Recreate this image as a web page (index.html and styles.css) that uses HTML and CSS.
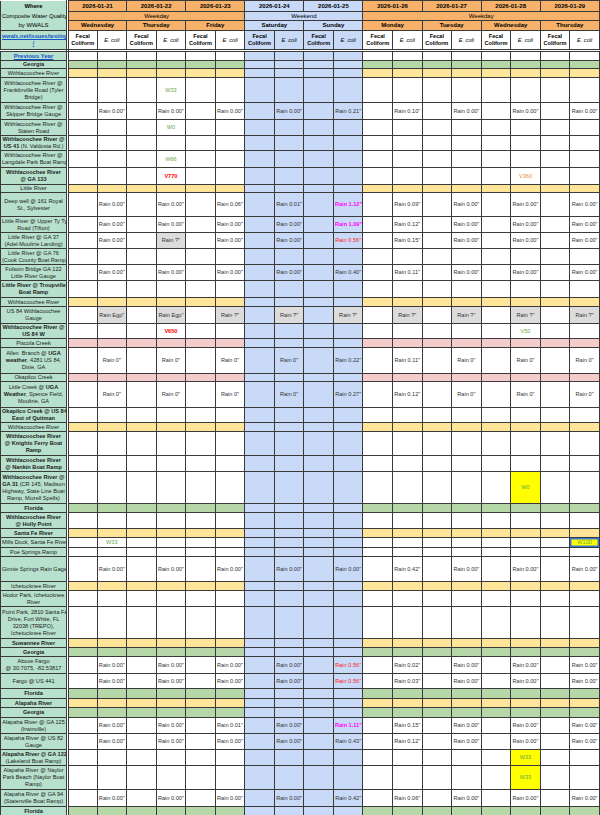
FILE: index.html
```html
<!DOCTYPE html>
<html lang="en">
<head>
<meta charset="utf-8">
<title>Composite Water Quality by WWALS</title>
<link rel="stylesheet" href="styles.css">
</head>
<body>
<table class="sheet">
<colgroup><col class="where"><col span="18"></colgroup>
<thead>
<tr class="hr1">
<th class="w"><b>Where</b></th>
<th colspan="2" class="or">2026-01-21</th><th colspan="2" class="or">2026-01-22</th><th colspan="2" class="or">2026-01-23</th><th colspan="2" class="bl">2026-01-24</th><th colspan="2" class="bl">2026-01-25</th><th colspan="2" class="or">2026-01-26</th><th colspan="2" class="or">2026-01-27</th><th colspan="2" class="or">2026-01-28</th><th colspan="2" class="or">2026-01-29</th>
</tr>
<tr class="hr2">
<th class="w">Composite Water Quality</th>
<th colspan="6" class="or n">Weekday</th><th colspan="4" class="bl n">Weekend</th><th colspan="8" class="or n">Weekday</th>
</tr>
<tr class="hr3">
<th class="w">by WWALS</th>
<th colspan="2" class="or">Wednesday</th><th colspan="2" class="or">Thursday</th><th colspan="2" class="or">Friday</th><th colspan="2" class="bl">Saturday</th><th colspan="2" class="bl">Sunday</th><th colspan="2" class="or">Monday</th><th colspan="2" class="or">Tuesday</th><th colspan="2" class="or">Wednesday</th><th colspan="2" class="or">Thursday</th>
</tr>
<tr class="hr4">
<th class="w"><a class="lnk" href="#">wwals.net/issues/testing<br>/</a></th>
<th>Fecal<br>Coliform</th><th class="ec">E. coli</th><th>Fecal<br>Coliform</th><th class="ec">E. coli</th><th>Fecal<br>Coliform</th><th class="ec">E. coli</th><th class="bl">Fecal<br>Coliform</th><th class="bl ec">E. coli</th><th class="bl">Fecal<br>Coliform</th><th class="bl ec">E. coli</th><th>Fecal<br>Coliform</th><th class="ec">E. coli</th><th>Fecal<br>Coliform</th><th class="ec">E. coli</th><th>Fecal<br>Coliform</th><th class="ec">E. coli</th><th>Fecal<br>Coliform</th><th class="ec">E. coli</th>
</tr>
</thead>
<tbody>
<tr class="h10"><th><a class="lnk prev" href="#">Previous Year</a></th><td></td><td></td><td></td><td></td><td></td><td></td><td></td><td></td><td></td><td></td><td></td><td></td><td></td><td></td><td></td><td></td><td></td><td></td></tr>
<tr class="grn h8"><th><b>Georgia</b></th><td></td><td></td><td></td><td></td><td></td><td></td><td></td><td></td><td></td><td></td><td></td><td></td><td></td><td></td><td></td><td></td><td></td><td></td></tr>
<tr class="yel h9"><th>Withlacoochee River</th><td></td><td></td><td></td><td></td><td></td><td></td><td></td><td></td><td></td><td></td><td></td><td></td><td></td><td></td><td></td><td></td><td></td><td></td></tr>
<tr class="h25"><th>Withlacoochee River @<br>Franklinville Road (Tyler<br>Bridge)</th><td></td><td></td><td></td><td class="g">W33</td><td></td><td></td><td></td><td></td><td></td><td></td><td></td><td></td><td></td><td></td><td></td><td></td><td></td><td></td></tr>
<tr class="h17"><th>Withlacoochee River @<br>Skipper Bridge Gauge</th><td></td><td>Rain 0.00"</td><td></td><td>Rain 0.00"</td><td></td><td>Rain 0.00"</td><td></td><td>Rain 0.00"</td><td></td><td>Rain 0.21"</td><td></td><td>Rain 0.10"</td><td></td><td>Rain 0.00"</td><td></td><td>Rain 0.00"</td><td></td><td>Rain 0.00"</td></tr>
<tr class="h16"><th>Withlacoochee River @<br>Staten Road</th><td></td><td></td><td></td><td class="g">W0</td><td></td><td></td><td></td><td></td><td></td><td></td><td></td><td></td><td></td><td></td><td></td><td></td><td></td><td></td></tr>
<tr class="h15"><th><b>Withlacoochee River @<br>US 41</b> (N. Valdosta Rd.)</th><td></td><td></td><td></td><td></td><td></td><td></td><td></td><td></td><td></td><td></td><td></td><td></td><td></td><td></td><td></td><td></td><td></td><td></td></tr>
<tr class="h17"><th>Withlacoochee River @<br>Langdale Park Boat Ramp</th><td></td><td></td><td></td><td class="g">W66</td><td></td><td></td><td></td><td></td><td></td><td></td><td></td><td></td><td></td><td></td><td></td><td></td><td></td><td></td></tr>
<tr class="h17"><th><b>Withlacoochee River<br>@ GA 133</b></th><td></td><td></td><td></td><td class="rb">V770</td><td></td><td></td><td></td><td></td><td></td><td></td><td></td><td></td><td></td><td></td><td></td><td class="o">V360</td><td></td><td></td></tr>
<tr class="yel h8"><th>Little River</th><td></td><td></td><td></td><td></td><td></td><td></td><td></td><td></td><td></td><td></td><td></td><td></td><td></td><td></td><td></td><td></td><td></td><td></td></tr>
<tr class="h24"><th>Deep well @ 161 Royal<br>St., Sylvester</th><td></td><td>Rain 0.00"</td><td></td><td>Rain 0.00"</td><td></td><td>Rain 0.06"</td><td></td><td>Rain 0.01"</td><td></td><td class="m">Rain 1.12"</td><td></td><td>Rain 0.09"</td><td></td><td>Rain 0.00"</td><td></td><td>Rain 0.00"</td><td></td><td>Rain 0.00"</td></tr>
<tr class="h16"><th>Little River @ Upper Ty Ty<br>Road (Tifton)</th><td></td><td>Rain 0.00"</td><td></td><td>Rain 0.00"</td><td></td><td>Rain 0.00"</td><td></td><td>Rain 0.00"</td><td></td><td class="m">Rain 1.09"</td><td></td><td>Rain 0.12"</td><td></td><td>Rain 0.00"</td><td></td><td>Rain 0.00"</td><td></td><td>Rain 0.00"</td></tr>
<tr class="h16"><th>Little River @ GA 37<br>(Adel-Moultrie Landing)</th><td></td><td>Rain 0.00"</td><td></td><td class="gy">Rain ?"</td><td></td><td>Rain 0.00"</td><td></td><td>Rain 0.00"</td><td></td><td class="r">Rain 0.56"</td><td></td><td>Rain 0.15"</td><td></td><td>Rain 0.00"</td><td></td><td>Rain 0.00"</td><td></td><td>Rain 0.00"</td></tr>
<tr class="h16"><th>Little River @ GA 76<br>(Cook County Boat Ramp)</th><td></td><td></td><td></td><td></td><td></td><td></td><td></td><td></td><td></td><td></td><td></td><td></td><td></td><td></td><td></td><td></td><td></td><td></td></tr>
<tr class="h16"><th>Folsom Bridge GA 122<br>Little River Gauge</th><td></td><td>Rain 0.00"</td><td></td><td>Rain 0.00"</td><td></td><td>Rain 0.00"</td><td></td><td>Rain 0.00"</td><td></td><td>Rain 0.40"</td><td></td><td>Rain 0.11"</td><td></td><td>Rain 0.00"</td><td></td><td>Rain 0.00"</td><td></td><td>Rain 0.00"</td></tr>
<tr class="h17"><th><b>Little River @ Troupville<br>Boat Ramp</b></th><td></td><td></td><td></td><td></td><td></td><td></td><td></td><td></td><td></td><td></td><td></td><td></td><td></td><td></td><td></td><td></td><td></td><td></td></tr>
<tr class="yel h9"><th>Withlacoochee River</th><td></td><td></td><td></td><td></td><td></td><td></td><td></td><td></td><td></td><td></td><td></td><td></td><td></td><td></td><td></td><td></td><td></td><td></td></tr>
<tr class="h17"><th>US 84 Withlacoochee<br>Gauge</th><td></td><td class="gy">Rain Egp"</td><td></td><td class="gy">Rain Egp"</td><td></td><td class="gy">Rain ?"</td><td></td><td class="gy">Rain ?"</td><td></td><td class="gy">Rain ?"</td><td></td><td class="gy">Rain ?"</td><td></td><td class="gy">Rain ?"</td><td></td><td class="gy">Rain ?"</td><td></td><td class="gy">Rain ?"</td></tr>
<tr class="h15"><th><b>Withlacoochee River @<br>US 84 W</b></th><td></td><td></td><td></td><td class="rb">V650</td><td></td><td></td><td></td><td></td><td></td><td></td><td></td><td></td><td></td><td></td><td></td><td class="g">V50</td><td></td><td></td></tr>
<tr class="pnk h9"><th>Piscola Creek</th><td></td><td></td><td></td><td></td><td></td><td></td><td></td><td></td><td></td><td></td><td></td><td></td><td></td><td></td><td></td><td></td><td></td><td></td></tr>
<tr class="h26"><th>Allen &nbsp;Branch @ <b>UGA<br>weather</b>, 4281 US 84,<br>Dixie, GA</th><td></td><td>Rain 0"</td><td></td><td>Rain 0"</td><td></td><td>Rain 0"</td><td></td><td>Rain 0"</td><td></td><td>Rain 0.22"</td><td></td><td>Rain 0.11"</td><td></td><td>Rain 0"</td><td></td><td>Rain 0"</td><td></td><td>Rain 0"</td></tr>
<tr class="pnk h8"><th>Okapilco Creek</th><td></td><td></td><td></td><td></td><td></td><td></td><td></td><td></td><td></td><td></td><td></td><td></td><td></td><td></td><td></td><td></td><td></td><td></td></tr>
<tr class="h26"><th>Little Creek @ <b>UGA<br>Weather</b>, Spence Field,<br>Moultrie, GA</th><td></td><td>Rain 0"</td><td></td><td>Rain 0"</td><td></td><td>Rain 0"</td><td></td><td>Rain 0"</td><td></td><td>Rain 0.27"</td><td></td><td>Rain 0.12"</td><td></td><td>Rain 0"</td><td></td><td>Rain 0"</td><td></td><td>Rain 0"</td></tr>
<tr class="h15"><th><b>Okapilco Creek @ US 84<br>East of Quitman</b></th><td></td><td></td><td></td><td></td><td></td><td></td><td></td><td></td><td></td><td></td><td></td><td></td><td></td><td></td><td></td><td></td><td></td><td></td></tr>
<tr class="yel h9"><th>Withlacoochee River</th><td></td><td></td><td></td><td></td><td></td><td></td><td></td><td></td><td></td><td></td><td></td><td></td><td></td><td></td><td></td><td></td><td></td><td></td></tr>
<tr class="h24"><th><b>Withlacoochee River<br>@ Knights Ferry Boat<br>Ramp</b></th><td></td><td></td><td></td><td></td><td></td><td></td><td></td><td></td><td></td><td></td><td></td><td></td><td></td><td></td><td></td><td></td><td></td><td></td></tr>
<tr class="h16"><th><b>Withlacoochee River<br>@ Nankin Boat Ramp</b></th><td></td><td></td><td></td><td></td><td></td><td></td><td></td><td></td><td></td><td></td><td></td><td></td><td></td><td></td><td></td><td></td><td></td><td></td></tr>
<tr class="h32"><th><b>Withlacoochee River @<br>GA 31</b> (CR 145, Madison<br>Highway, State Line Boat<br>Ramp, Mozell Spells)</th><td></td><td></td><td></td><td></td><td></td><td></td><td></td><td></td><td></td><td></td><td></td><td></td><td></td><td></td><td></td><td class="yl g">W0</td><td></td><td></td></tr>
<tr class="grn h9"><th><b>Florida</b></th><td></td><td></td><td></td><td></td><td></td><td></td><td></td><td></td><td></td><td></td><td></td><td></td><td></td><td></td><td></td><td></td><td></td><td></td></tr>
<tr class="h16"><th><b>Withlacoochee River<br>@ Holly Point</b></th><td></td><td></td><td></td><td></td><td></td><td></td><td></td><td></td><td></td><td></td><td></td><td></td><td></td><td></td><td></td><td></td><td></td><td></td></tr>
<tr class="yel h9"><th><b>Santa Fe River</b></th><td></td><td></td><td></td><td></td><td></td><td></td><td></td><td></td><td></td><td></td><td></td><td></td><td></td><td></td><td></td><td></td><td></td><td></td></tr>
<tr class="h10"><th>Mills Dock, Santa Fe River</th><td></td><td class="g">W33</td><td></td><td></td><td></td><td></td><td></td><td></td><td></td><td></td><td></td><td></td><td></td><td></td><td></td><td></td><td></td><td class="yl g sel">W100</td></tr>
<tr class="h9"><th>Poe Springs Ramp</th><td></td><td></td><td></td><td></td><td></td><td></td><td></td><td></td><td></td><td></td><td></td><td></td><td></td><td></td><td></td><td></td><td></td><td></td></tr>
<tr class="h25"><th>Ginnie Springs Rain Gage</th><td></td><td>Rain 0.00"</td><td></td><td>Rain 0.00"</td><td></td><td>Rain 0.00"</td><td></td><td>Rain 0.00"</td><td></td><td>Rain 0.00"</td><td></td><td>Rain 0.42"</td><td></td><td>Rain 0.00"</td><td></td><td>Rain 0.00"</td><td></td><td>Rain 0.00"</td></tr>
<tr class="yel h9"><th>Ichetucknee River</th><td></td><td></td><td></td><td></td><td></td><td></td><td></td><td></td><td></td><td></td><td></td><td></td><td></td><td></td><td></td><td></td><td></td><td></td></tr>
<tr class="h16"><th>Hodor Park, Ichetucknee<br>River</th><td></td><td></td><td></td><td></td><td></td><td></td><td></td><td></td><td></td><td></td><td></td><td></td><td></td><td></td><td></td><td></td><td></td><td></td></tr>
<tr class="h32"><th>Point Park, 2810 Santa Fe<br>Drive, Fort White, FL<br>32038 (TREPO),<br>Ichetucknee River</th><td></td><td></td><td></td><td></td><td></td><td></td><td></td><td></td><td></td><td></td><td></td><td></td><td></td><td></td><td></td><td></td><td></td><td></td></tr>
<tr class="yel h9"><th><b>Suwannee River</b></th><td></td><td></td><td></td><td></td><td></td><td></td><td></td><td></td><td></td><td></td><td></td><td></td><td></td><td></td><td></td><td></td><td></td><td></td></tr>
<tr class="grn h9"><th><b>Georgia</b></th><td></td><td></td><td></td><td></td><td></td><td></td><td></td><td></td><td></td><td></td><td></td><td></td><td></td><td></td><td></td><td></td><td></td><td></td></tr>
<tr class="h17"><th>Above Fargo<br>@ 30.7075, -82.53817</th><td></td><td>Rain 0.00"</td><td></td><td>Rain 0.00"</td><td></td><td>Rain 0.00"</td><td></td><td>Rain 0.00"</td><td></td><td class="r">Rain 0.56"</td><td></td><td>Rain 0.02"</td><td></td><td>Rain 0.00"</td><td></td><td>Rain 0.00"</td><td></td><td>Rain 0.00"</td></tr>
<tr class="h15"><th>Fargo @ US 441</th><td></td><td>Rain 0.00"</td><td></td><td>Rain 0.00"</td><td></td><td>Rain 0.00"</td><td></td><td>Rain 0.00"</td><td></td><td class="r">Rain 0.56"</td><td></td><td>Rain 0.03"</td><td></td><td>Rain 0.00"</td><td></td><td>Rain 0.00"</td><td></td><td>Rain 0.00"</td></tr>
<tr class="grn h10"><th><b>Florida</b></th><td></td><td></td><td></td><td></td><td></td><td></td><td></td><td></td><td></td><td></td><td></td><td></td><td></td><td></td><td></td><td></td><td></td><td></td></tr>
<tr class="yel h9"><th><b>Alapaha River</b></th><td></td><td></td><td></td><td></td><td></td><td></td><td></td><td></td><td></td><td></td><td></td><td></td><td></td><td></td><td></td><td></td><td></td><td></td></tr>
<tr class="grn h10"><th><b>Georgia</b></th><td></td><td></td><td></td><td></td><td></td><td></td><td></td><td></td><td></td><td></td><td></td><td></td><td></td><td></td><td></td><td></td><td></td><td></td></tr>
<tr class="h16"><th>Alapaha River @ GA 125<br>(Irwinville)</th><td></td><td>Rain 0.00"</td><td></td><td>Rain 0.00"</td><td></td><td>Rain 0.01"</td><td></td><td>Rain 0.00"</td><td></td><td class="m">Rain 1.11"</td><td></td><td>Rain 0.15"</td><td></td><td>Rain 0.00"</td><td></td><td>Rain 0.00"</td><td></td><td>Rain 0.00"</td></tr>
<tr class="h16"><th>Alapaha River @ US 82<br>Gauge</th><td></td><td>Rain 0.00"</td><td></td><td>Rain 0.00"</td><td></td><td>Rain 0.00"</td><td></td><td>Rain 0.00"</td><td></td><td>Rain 0.43"</td><td></td><td>Rain 0.12"</td><td></td><td>Rain 0.00"</td><td></td><td>Rain 0.00"</td><td></td><td>Rain 0.00"</td></tr>
<tr class="h16"><th><b>Alapaha River @ GA 122</b><br>(Lakeland Boat Ramp)</th><td></td><td></td><td></td><td></td><td></td><td></td><td></td><td></td><td></td><td></td><td></td><td></td><td></td><td></td><td></td><td class="yl g">W33</td><td></td><td></td></tr>
<tr class="h24"><th>Alapaha River @ Naylor<br>Park Beach (Naylor Boat<br>Ramp)</th><td></td><td></td><td></td><td></td><td></td><td></td><td></td><td></td><td></td><td></td><td></td><td></td><td></td><td></td><td></td><td class="yl g">W33</td><td></td><td></td></tr>
<tr class="h17"><th>Alapaha River @ GA 94<br>(Statenville Boat Ramp)</th><td></td><td>Rain 0.00"</td><td></td><td>Rain 0.00"</td><td></td><td>Rain 0.00"</td><td></td><td>Rain 0.00"</td><td></td><td>Rain 0.42"</td><td></td><td>Rain 0.06"</td><td></td><td>Rain 0.00"</td><td></td><td>Rain 0.00"</td><td></td><td>Rain 0.00"</td></tr>
<tr class="grn h10"><th><b>Florida</b></th><td></td><td></td><td></td><td></td><td></td><td></td><td></td><td></td><td></td><td></td><td></td><td></td><td></td><td></td><td></td><td></td><td></td><td></td></tr>
</tbody>
</table>
</body>
</html>
```

FILE: styles.css
```css
html, body {
  margin: 0;
  padding: 0;
  background: #ffffff;
}

.sheet {
  width: 600px;
  border-collapse: collapse;
  table-layout: fixed;
  font-family: "Liberation Sans", Arial, sans-serif;
  font-size: 5.6px;
  line-height: 7px;
  color: #222222;
}

.sheet col.where {
  width: 67px;
}

.sheet th,
.sheet td {
  border: 1px solid #3a3a3a;
  padding: 0 1px;
  text-align: center;
  vertical-align: middle;
  overflow: hidden;
  white-space: nowrap;
}

/* header */
.sheet thead th {
  color: #000000;
  font-weight: bold;
  background: #ffffff;
}

.sheet thead th.w {
  background: #b7e1cd;
  font-weight: normal;
  font-size: 5.9px;
  border-right: 3px double #3a3a3a;
  border-top: none;
  border-bottom: none;
}

.sheet thead .hr4 th {
  border-bottom: 3px double #3a3a3a;
  font-size: 5.6px;
}

.sheet thead .hr4 th.w {
  border-top: 1px solid #3a3a3a;
  border-bottom: 3px double #3a3a3a;
}

.sheet thead th.or { background: #f6b26b; }
.sheet thead th.bl { background: #c9daf8; }
.sheet thead th.n { font-weight: normal; }
.sheet thead th.ec { font-style: italic; font-weight: normal; }

.hr1 { height: 11px; }
.hr1 th { font-size: 6px; }
.hr2 { height: 9px; }
.hr2 th { font-size: 6px; }
.hr3 { height: 10px; }
.hr3 th { font-size: 6px; }
.hr4 { height: 20px; }

.lnk {
  color: #1155cc;
  font-weight: bold;
  text-decoration: underline;
}

.prev {
  font-size: 6px;
}

/* body */
.sheet tbody th {
  background: #b7e1cd;
  font-weight: normal;
  border-right: 3px double #3a3a3a;
  color: #222222;
}

.sheet tbody td {
  background: #ffffff;
  color: #333333;
}

.sheet tbody tr.grn td { background: #b6d7a8; }
.sheet tbody tr.yel td { background: #ffe599; }
.sheet tbody tr.pnk td { background: #f4cccc; }

/* weekend columns (2026-01-24, 2026-01-25) */
.sheet tbody td:nth-child(n+8):nth-child(-n+11) {
  background: #c9daf8;
}

.sheet tbody tr td.gy:nth-child(n) { background: #dcdcdc; }
.sheet tbody tr td.yl:nth-child(n) { background: #ffff00; }

.sel { box-shadow: inset 0 0 0 1.5px #3c78d8; }

.g { color: #6aa84f !important; }
.o { color: #e69138 !important; }
.r { color: #ff2020 !important; }
.rb { color: #ff0000 !important; font-weight: bold; }
.m { color: #ff00ff !important; font-weight: bold; }

/* row heights */
.h8 { height: 8px; }
.h9 { height: 9px; }
.h10 { height: 10px; }
.h11 { height: 11px; }
.h15 { height: 15px; }
.h16 { height: 16px; }
.h17 { height: 17px; }
.h24 { height: 24px; }
.h25 { height: 25px; }
.h26 { height: 26px; }
.h32 { height: 32px; }
```
